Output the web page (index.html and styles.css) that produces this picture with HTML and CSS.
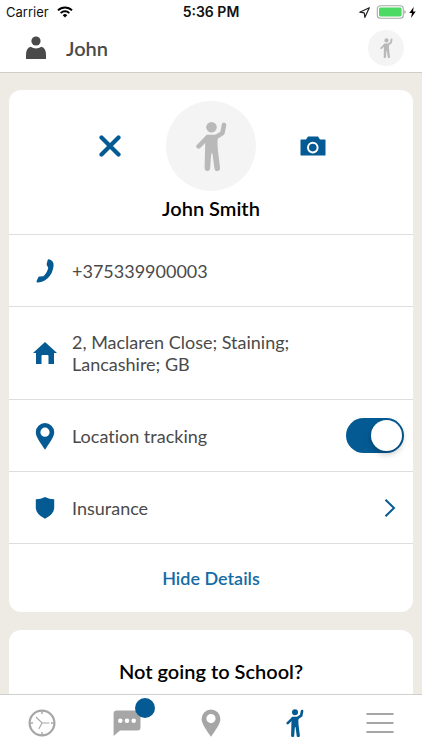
FILE: index.html
```html
<!DOCTYPE html>
<html lang="en">
<head>
<meta charset="utf-8">
<meta name="viewport" content="width=device-width, initial-scale=1">
<title>John</title>
<link rel="stylesheet" href="styles.css">
</head>
<body>
<svg class="defs" aria-hidden="true">
  <symbol id="kid" viewBox="0 0 94 150">
    <circle cx="47" cy="18" r="16" fill="currentColor"/>
    <path d="M85 11L80 36L62 47M8 76L34 50" fill="none" stroke="currentColor" stroke-width="14" stroke-linecap="round" stroke-linejoin="round"/>
    <path d="M32 41H61L68 44L65 62L66 84L73 142A8 8 0 0 1 56 143L50 99Q48 95 46 99L43 142A8 8 0 0 1 26 142L28 66L25 52Z" fill="currentColor"/>
  </symbol>
</svg>

<div class="status">
  <span class="status-left">Carrier
    <svg width="16" height="12" viewBox="0 0 16 12" fill="none" stroke="#000" stroke-width="2">
      <path d="M1 4.4A10 10 0 0 1 15 4.4M3.7 7.1A6.2 6.2 0 0 1 12.3 7.1"/>
      <path d="M8 11.5L5.7 9.2A3.3 3.3 0 0 1 10.3 9.2Z" fill="#000" stroke="none"/>
    </svg>
  </span>
  <time>5:36 PM</time>
  <span class="status-right">
    <svg width="11" height="11" viewBox="0 0 11 11" fill="none" stroke="#222" stroke-width="1.2" stroke-linejoin="round"><path d="M10.3 .7L.8 5.2L5.2 5.8L5.9 10.3Z"/></svg>
    <svg width="30" height="14" viewBox="0 0 30 14"><rect x="1.3" y=".8" width="26" height="12.4" rx="3" fill="#fff" stroke="#a8aaa8" stroke-width="1.1"/><rect x="3" y="2.5" width="22.6" height="9" rx="1.4" fill="#4cd964"/><path d="M28.4 5Q29.8 5.6 29.8 7T28.4 9Z" fill="#a8aaa8"/></svg>
    <svg width="7" height="11" viewBox="0 0 7 11"><path d="M4.7 0L.3 6H3L2 11L6.7 4.6H4Z"/></svg>
  </span>
</div>

<header class="header">
  <svg width="20" height="24" viewBox="0 0 20 24" fill="#4a4a4a"><circle cx="10" cy="5" r="4.6"/><path d="M0 23V19Q0 12 4.5 10.7Q10 14.2 15.5 10.7Q20 12 20 19V23Z"/></svg>
  <h1>John</h1>
  <button class="avatar avatar-small" aria-label="Open profile"><svg><use href="#kid"/></svg></button>
</header>

<main class="content">
  <section class="card">
    <div class="profile">
      <button class="action" aria-label="Remove"><svg width="22" height="22" viewBox="0 0 22 22" stroke="#045b94" stroke-width="4.2" stroke-linecap="round"><path d="M2.5 2.5L19.5 19.5M19.5 2.5L2.5 19.5"/></svg></button>
      <div class="avatar avatar-large"><svg><use href="#kid"/></svg></div>
      <button class="action" aria-label="Change photo"><svg width="26" height="20" viewBox="0 0 26 20"><path d="M1 3.5H6L8 .5H18L20 3.5H25Q25.5 3.5 25.5 4V19Q25.5 19.5 25 19.5H1Q.5 19.5 .5 19V4Q.5 3.5 1 3.5Z" fill="#045b94"/><circle cx="12.8" cy="11.6" r="4.8" fill="none" stroke="#fff" stroke-width="2"/></svg></button>
      <h2>John Smith</h2>
    </div>
    <div class="row">
      <svg class="icon" viewBox="0 0 24 24"><path d="M15.8 .3Q20.9 1.5 20.6 6.5Q20 14.5 14.4 19.4Q9.8 23.3 4.3 23.6Q3.2 23.5 3.6 22L5.2 18.4Q5.6 17.5 6.5 17.4L10.4 17.2Q14.4 13.600 15.2 8.700L13.900 6.300Q13.500 5.600 13.700 4.800L14.700 1Q15 .2 15.800 .3Z"/></svg>
      <span>+375339900003</span>
    </div>
    <div class="row">
      <svg class="icon" viewBox="0 0 24 24"><path d="M12 1L24 12H21V23H15.5V15Q15.5 14 14.5 14H9.5Q8.5 14 8.5 15V23H3V12H0Z"/></svg>
      <address>2, Maclaren Close; Staining; Lancashire; GB</address>
    </div>
    <div class="row">
      <svg class="icon icon-tall" viewBox="0 0 24 28"><path fill-rule="evenodd" d="M12 1A9.2 9.2 0 0 1 21.2 10.2C21.2 15 16 21.5 12 27.8C8 21.5 2.8 15 2.8 10.2A9.2 9.2 0 0 1 12 1ZM12 5.6A4.6 4.6 0 1 0 12 14.8A4.6 4.6 0 1 0 12 5.6Z"/></svg>
      <label for="tracking">Location tracking</label>
      <input class="switch" id="tracking" type="checkbox" role="switch" checked>
    </div>
    <a class="row" href="#insurance">
      <svg class="icon" viewBox="0 0 24 24"><path d="M12 1Q16.5 3.3 21.2 3.2V12Q21 18.2 12 22.8Q3 18.2 2.8 12V3.2Q7.5 3.3 12 1Z"/></svg>
      <span>Insurance</span>
      <svg class="chevron" width="12" height="20" viewBox="0 0 12 20"><path d="M1.5 1.8L10 10L1.5 18.2" fill="none" stroke="#045b94" stroke-width="2"/></svg>
    </a>
    <button class="toggle-details">Hide Details</button>
  </section>
  <section class="card school">
    <h2>Not going to School?</h2>
  </section>
</main>

<nav class="tabs">
  <a href="#history" aria-label="History"><svg width="28" height="28" viewBox="0 0 28 28" fill="none" stroke="#a6a6a6"><circle cx="14" cy="14" r="12.4" stroke-width="2.2"/><path d="M14 2.5V5M14 23V25.5M2.5 14H5M23 14H25.5" stroke-width="1.4"/><path d="M8 8L14 14H21.5M14 14L10.8 20" stroke-width="1.1"/></svg></a>
  <a href="#messages" aria-label="Messages"><svg width="28" height="28" viewBox="0 0 28 28"><path d="M4 1.5H24.5Q27.5 1.5 27.5 4.5V18.5Q27.5 21.5 24.5 21.5H7L.6 27V4.5Q.6 1.5 4 1.5Z" fill="#a6a6a6"/><g fill="#fff"><circle cx="7.3" cy="11.7" r="2.3"/><circle cx="14" cy="11.7" r="2.3"/><circle cx="20.7" cy="11.7" r="2.3"/></g></svg><span class="badge"></span></a>
  <a href="#map" aria-label="Map"><svg width="28" height="28" viewBox="0 0 28 28" fill="#a6a6a6"><path fill-rule="evenodd" d="M14 .5A9.4 9.4 0 0 1 23.4 9.900C23.4 15 18 21.5 14 27.8C10 21.5 4.6 15 4.6 9.9A9.4 9.4 0 0 1 14 .5ZM14 5A4.6 4.6 0 1 0 14 14.2A4.6 4.6 0 1 0 14 5Z"/></svg></a>
  <a class="current" href="#children" aria-label="Children" aria-current="page"><svg width="18" height="28"><use href="#kid"/></svg></a>
  <a href="#menu" aria-label="Menu"><svg width="28" height="28" viewBox="0 0 28 28" stroke="#a6a6a6" stroke-width="2"><path d="M.5 5H27.5M.5 14H27.5M.5 23H27.5"/></svg></a>
</nav>
</body>
</html>
```
FILE: styles.css
```css
* {
  box-sizing: border-box;
}

body {
  display: flex;
  flex-direction: column;
  height: 100vh;
  margin: 0;
  background: #eeebe5;
  color: #4a4a4a;
  font: 18px/22px Lato, "Open Sans", sans-serif;
  font-variant-ligatures: none;
}

button {
  border: 0;
  padding: 0;
  background: none;
  font: inherit;
  cursor: pointer;
}

svg {
  display: block;
  flex: none;
}

h1, h2 {
  margin: 0;
  font-size: 20px;
  font-weight: 600;
  line-height: 24px;
}

h2 {
  color: #000;
  text-align: center;
}

.defs {
  position: absolute;
  width: 0;
  height: 0;
}

.status {
  display: grid;
  grid-template-columns: 1fr auto 1fr;
  align-items: center;
  flex: none;
  height: 24px;
  padding: 0 6px;
  background: #fff;
  color: #111;
  font: 13px/24px Inter, Roboto, sans-serif;
}

.status time {
  font-size: 14px;
  font-weight: 600;
}

.status-left,
.status-right {
  display: flex;
  align-items: center;
  gap: 8px;
}

.status-right {
  justify-content: flex-end;
  gap: 3px;
}

.status-right svg:first-child {
  margin-right: 3px;
}

.header {
  display: flex;
  align-items: center;
  gap: 20px;
  flex: none;
  height: 49px;
  padding: 0 18px 0 26px;
  border-bottom: 1px solid #cfcdca;
  background: #fff;
}

.header h1 {
  flex: 1;
}

.avatar {
  display: grid;
  place-items: center;
  border-radius: 50%;
  background: #f4f4f4;
  color: #b9b9b9;
}

.avatar-small {
  width: 36px;
  height: 36px;
}

.avatar-small svg {
  width: 13px;
  height: 20px;
}

.avatar-large {
  width: 90px;
  height: 90px;
}

.avatar-large svg {
  width: 31px;
  height: 50px;
}

.content {
  display: flex;
  flex-direction: column;
  gap: 18px;
  flex: 1;
  min-height: 0;
  padding: 17px 9px;
  overflow-y: auto;
  scrollbar-width: none;
}

.card {
  flex: none;
  border-radius: 12px;
  background: #fff;
}

.profile {
  display: grid;
  grid-template-columns: 1fr 90px 1fr;
  justify-items: center;
  align-items: center;
  row-gap: 5px;
  padding: 11px 0 14px;
}

.profile h2 {
  grid-column: 1 / -1;
}

.action {
  display: grid;
  place-items: center;
  width: 44px;
  height: 44px;
}

.action:first-child {
  justify-self: end;
  margin-right: 34px;
}

.action:nth-child(3) {
  justify-self: start;
  margin-left: 35px;
}

.row {
  display: flex;
  align-items: center;
  gap: 15px;
  min-height: 72px;
  padding: 16px 9px 16px 24px;
  border-top: 1px solid #dedede;
  color: inherit;
  text-decoration: none;
}

.icon {
  width: 24px;
  height: 24px;
  fill: #045b94;
}

.icon-tall {
  height: 28px;
}

address {
  max-width: 240px;
  padding: 8px 0;
  font-style: normal;
}

.switch {
  appearance: none;
  display: flex;
  align-items: center;
  width: 58px;
  height: 35px;
  margin: 0 0 0 auto;
  padding: 2px;
  border-radius: 18px;
  background: #c8c8c8;
}

.switch::before {
  content: "";
  width: 31px;
  height: 31px;
  border-radius: 50%;
  background: #fff;
  box-shadow: 0 3px 6px rgb(0 0 0 / 25%);
}

.switch:checked {
  justify-content: flex-end;
  background: #045b94;
}

.chevron {
  margin: 0 8px 0 auto;
}

.toggle-details {
  display: block;
  width: 100%;
  height: 69px;
  border-top: 1px solid #dedede;
  color: #146ca4;
  font-weight: 600;
}

.school {
  padding: 29px 9px 24px;
}

.tabs {
  display: grid;
  grid-template-columns: repeat(5, 1fr);
  flex: none;
  height: 56px;
  border-top: 1px solid #cfcfcf;
  background: #fff;
}

.tabs a {
  position: relative;
  display: grid;
  place-items: center;
}

.current {
  color: #045b94;
}

.badge {
  position: absolute;
  top: 3px;
  left: calc(50% + 8px);
  width: 20px;
  height: 20px;
  border-radius: 50%;
  background: #045b94;
}
```
